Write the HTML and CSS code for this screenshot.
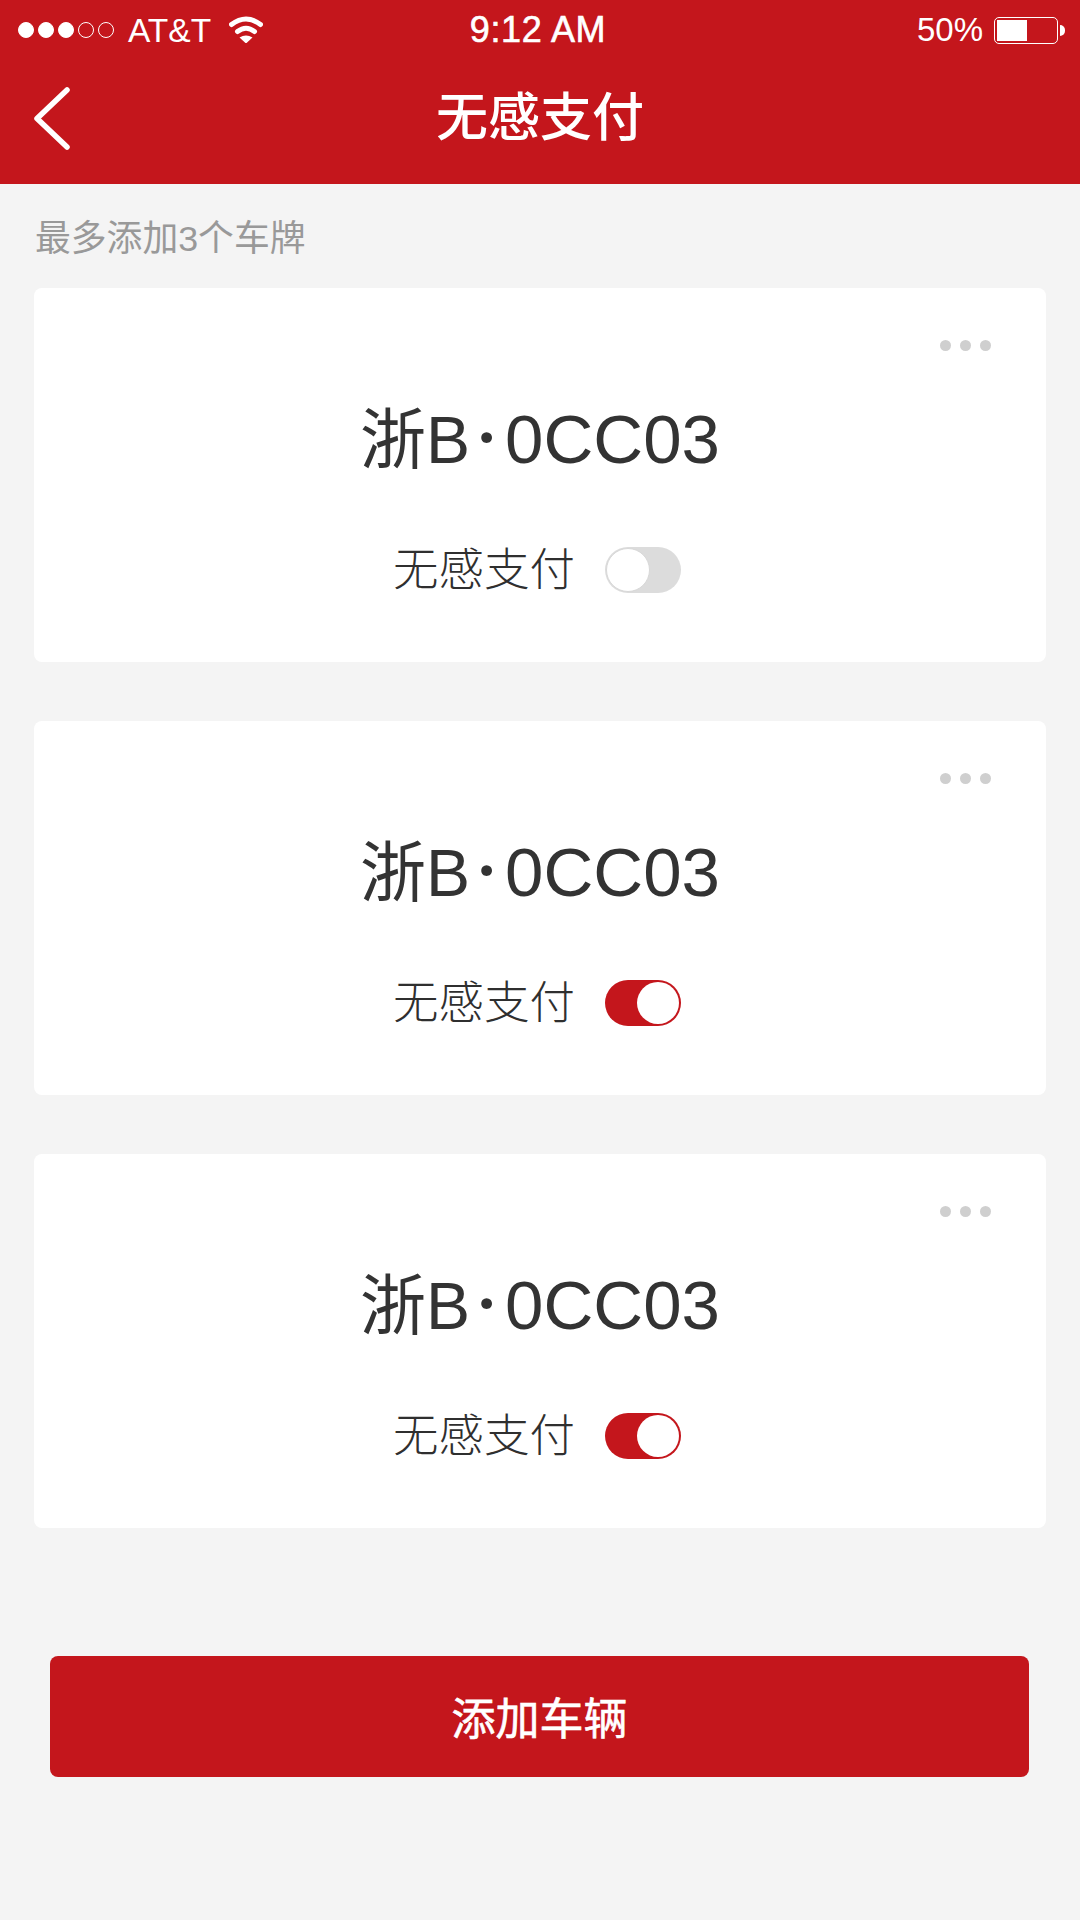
FILE: index.html
```html
<!DOCTYPE html>
<html lang="zh-CN">
<head>
<meta charset="utf-8">
<title>无感支付</title>
<link rel="stylesheet" href="styles.css">
</head>
<body>
<div class="screen">
  <header class="top">
    <div class="status">
      <div class="status-left">
        <div class="signal"><i class="on"></i><i class="on"></i><i class="on"></i><i></i><i></i></div>
        <span class="carrier">AT&amp;T</span>
        <svg class="wifi" viewBox="0 0 34 27"><path d="M2.500 8.500Q17-2.500 31.500 8.500" fill="none" stroke="#fff" stroke-width="5" stroke-linecap="round"/><path d="M8.500 15.500Q17 9 25.500 15.500" fill="none" stroke="#fff" stroke-width="5" stroke-linecap="round"/><path d="M10.500 21.500Q17 17.500 23.500 21.500L17 27.500z" fill="#fff"/></svg>
      </div>
      <div class="time">9:12 AM</div>
      <div class="status-right">
        <span class="percent">50%</span>
        <div class="battery"><div class="battery-fill"></div></div>
        <div class="battery-nub"></div>
      </div>
    </div>
    <nav class="nav">
      <svg class="back" viewBox="0 0 36 63"><path d="M33 3L3 31.500 33 60" fill="none" stroke="#fff" stroke-width="5.500" stroke-linecap="round" stroke-linejoin="round"/></svg>
      <h1 class="title">无感支付</h1>
    </nav>
  </header>
  <main class="content">
    <p class="tip">最多添加3个车牌</p>
    <section class="cards">
      <article class="card">
        <div class="more"><i></i><i></i><i></i></div>
        <div class="plate">浙B<span class="sep">·</span><span class="num">0CC03</span></div>
        <div class="row"><span class="label">无感支付</span><span class="toggle"><span class="knob"></span></span></div>
      </article>
      <article class="card">
        <div class="more"><i></i><i></i><i></i></div>
        <div class="plate">浙B<span class="sep">·</span><span class="num">0CC03</span></div>
        <div class="row"><span class="label">无感支付</span><span class="toggle is-on"><span class="knob"></span></span></div>
      </article>
      <article class="card">
        <div class="more"><i></i><i></i><i></i></div>
        <div class="plate">浙B<span class="sep">·</span><span class="num">0CC03</span></div>
        <div class="row"><span class="label">无感支付</span><span class="toggle is-on"><span class="knob"></span></span></div>
      </article>
    </section>
    <button class="add" type="button">添加车辆</button>
  </main>
</div>
</body>
</html>
```

FILE: styles.css
```css
* { box-sizing: border-box; }
html, body { margin: 0; padding: 0; }
body {
  width: 1080px;
  height: 1920px;
  background: #f4f4f4;
  font-family: "Liberation Sans", "Noto Sans CJK SC", sans-serif;
  overflow: hidden;
}
.screen { width: 1080px; height: 1920px; display: flex; flex-direction: column; }

.top { background: #c4161c; height: 184px; color: #fff; flex: none; }
.status {
  height: 60px;
  display: grid;
  grid-template-columns: 1fr auto 1fr;
  align-items: center;
  padding: 0 15px 2px 18px;
}
.status-left, .status-right { display: flex; align-items: center; }
.status-right { justify-content: flex-end; }
.signal { display: flex; gap: 4px; }
.signal i { width: 16px; height: 16px; border-radius: 50%; border: 1.500px solid #fff; display: block; }
.signal i.on { background: #fff; }
.carrier { font-size: 33.500px; margin: 2px 0 0 14px; line-height: 58px; }
.wifi { width: 34px; height: 27px; margin-left: 18px; margin-top: -2px; }
.time { font-size: 36px; letter-spacing: .6px; -webkit-text-stroke: .6px #fff; line-height: 58px; margin: -1px 0 0 -7px; }
.percent { font-size: 33px; line-height: 58px; margin: 0 11px 0 0; }
.battery { width: 64px; height: 27px; border: 1.500px solid #fff; border-radius: 5px; padding: 2px; }
.battery-fill { width: 30px; height: 100%; background: #fff; }
.battery-nub { width: 5px; height: 11px; background: #fff; border-radius: 0 6px 6px 0; margin-left: 2px; }

.nav { height: 124px; position: relative; display: flex; align-items: center; justify-content: center; }
.back { position: absolute; left: 34px; top: 27px; width: 36px; height: 63px; }
.title { margin: 0 0 8px; font-size: 52px; font-weight: 500; line-height: 64px; letter-spacing: 0; }

.content { flex: 1; padding: 0 34px; display: flex; flex-direction: column; }
.tip { margin: 0 0 0 1px; height: 104px; padding-top: 27px; font-size: 35.800px; line-height: 56px; color: #999; }
.cards { display: flex; flex-direction: column; gap: 59px; }
.card { height: 374px; background: #fff; border-radius: 8px; display: flex; flex-direction: column; align-items: center; }
.more { align-self: flex-end; display: flex; gap: 9px; margin: 52px 55px 0 0; height: 11px; }
.more i { width: 11px; height: 11px; border-radius: 50%; background: #cfcfcf; display: block; }
.plate { margin-top: 47px; font-size: 66px; line-height: 84px; color: #333; white-space: nowrap; }
.sep { display: inline-block; width: 33px; margin-right: 2px; text-align: center; font-family: "Lato", sans-serif; font-size: 72px; line-height: 60px; vertical-align: 4px; }
.num { font-size: 69px; }
.row { margin-top: 60px; display: flex; align-items: center; gap: 30px; margin-left: -6px; }
.label { font-size: 45.500px; line-height: 54px; padding-top: 2px; color: #2f2f2f; font-weight: 300; }
.toggle {
  width: 76px; height: 46px; border-radius: 23px; background: #dcdcdc;
  display: flex; align-items: center; justify-content: flex-start; padding: 1px;
}
.knob { width: 44px; height: 44px; border-radius: 50%; background: #fff; border: 1.500px solid #d8d8d8; display: block; }
.toggle.is-on { background: #c4161c; justify-content: flex-end; }
.toggle.is-on .knob { border: 0; width: 42px; height: 42px; margin: 1px; }

.add {
  margin: 128px 17px 0 16px; height: 121px; flex: none;
  background: #c4161c; color: #fff; border: 0; border-radius: 8px;
  font-family: inherit; font-size: 44px; font-weight: 400; -webkit-text-stroke: .6px #fff; padding: 0 0 2px;
}
```
